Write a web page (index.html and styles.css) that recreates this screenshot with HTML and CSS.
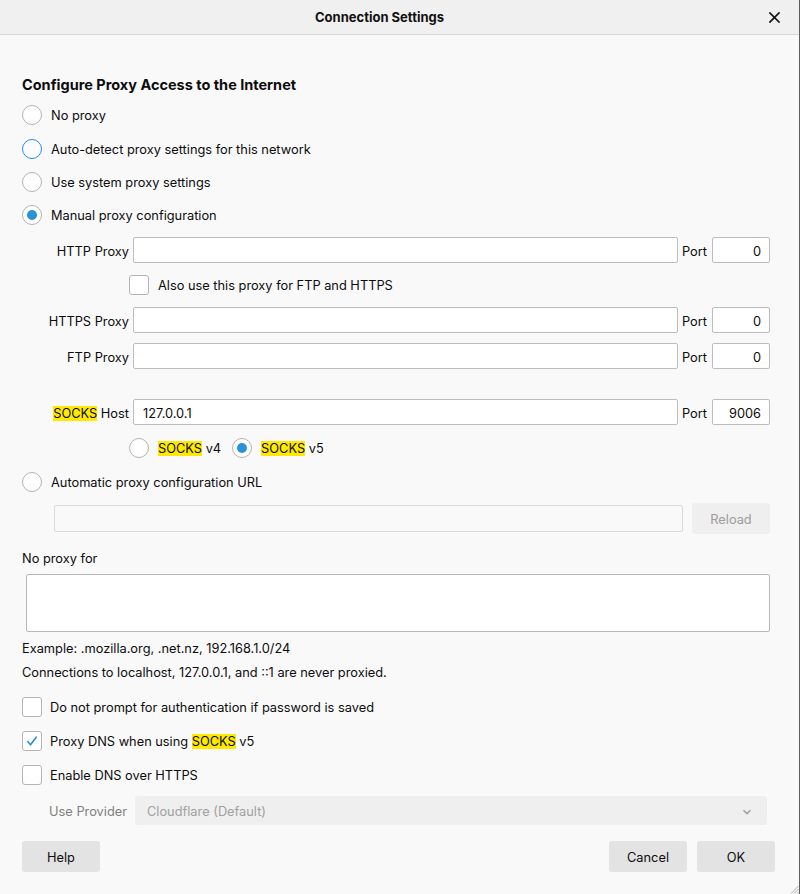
FILE: index.html
```html
<!DOCTYPE html>
<html lang="en">
<head>
<meta charset="utf-8">
<title>Connection Settings</title>
<link rel="stylesheet" href="styles.css">
</head>
<body>
<div class="window">
  <header class="titlebar">
    <h1 class="title">Connection Settings</h1>
    <span class="close" aria-label="Close">
      <svg width="11" height="11" viewBox="0 0 11 11"><path d="M1 1 L10 10 M10 1 L1 10" stroke="#111" stroke-width="1.7" stroke-linecap="square"/></svg>
    </span>
  </header>

  <main class="content">
    <h2 class="heading">Configure Proxy Access to the Internet</h2>

    <div class="choice mt11"><span class="radio"></span><span class="txt">No proxy</span></div>
    <div class="choice mt14"><span class="radio focused"></span><span class="txt">Auto-detect proxy settings for this network</span></div>
    <div class="choice mt13"><span class="radio"></span><span class="txt">Use system proxy settings</span></div>
    <div class="choice mt13"><span class="radio checked"></span><span class="txt">Manual proxy configuration</span></div>

    <div class="field-row mt12">
      <span class="field-label txt">HTTP Proxy</span>
      <span class="input host"></span>
      <span class="port-label txt">Port</span>
      <span class="input port">0</span>
    </div>

    <div class="choice indent mt12"><span class="checkbox"></span><span class="txt">Also use this proxy for FTP and HTTPS</span></div>

    <div class="field-row mt12">
      <span class="field-label txt">HTTPS Proxy</span>
      <span class="input host"></span>
      <span class="port-label txt">Port</span>
      <span class="input port">0</span>
    </div>

    <div class="field-row mt10">
      <span class="field-label txt">FTP Proxy</span>
      <span class="input host"></span>
      <span class="port-label txt">Port</span>
      <span class="input port">0</span>
    </div>

    <div class="field-row mt30">
      <span class="field-label txt"><mark>SOCKS</mark> Host</span>
      <span class="input host value">127.0.0.1</span>
      <span class="port-label txt">Port</span>
      <span class="input port">9006</span>
    </div>

    <div class="version-row indent mt13">
      <div class="choice"><span class="radio"></span><span class="txt"><mark>SOCKS</mark> v4</span></div>
      <div class="choice"><span class="radio checked"></span><span class="txt"><mark>SOCKS</mark> v5</span></div>
    </div>

    <div class="choice mt14"><span class="radio"></span><span class="txt">Automatic proxy configuration URL</span></div>

    <div class="url-row mt11">
      <span class="input url disabled"></span>
      <span class="button disabled-btn">Reload</span>
    </div>

    <p class="text-line mt17">No proxy for</p>
    <div class="textarea mt9"></div>
    <p class="text-line mt9">Example: .mozilla.org, .net.nz, 192.168.1.0/24</p>
    <p class="text-line mt10">Connections to localhost, 127.0.0.1, and ::1 are never proxied.</p>

    <div class="choice check mt18"><span class="checkbox"></span><span class="txt">Do not prompt for authentication if password is saved</span></div>
    <div class="choice check mt14"><span class="checkbox checked">
      <svg width="20" height="20" viewBox="0 0 20 20"><path d="M5.2 10.6 L8.4 14.2 L14.8 5.6" fill="none" stroke="#2a8fd7" stroke-width="1.8" stroke-linecap="round" stroke-linejoin="round"/></svg>
    </span><span class="txt">Proxy DNS when using <mark>SOCKS</mark> v5</span></div>
    <div class="choice check mt14"><span class="checkbox"></span><span class="txt">Enable DNS over HTTPS</span></div>

    <div class="provider-row mt11">
      <span class="provider-label txt">Use Provider</span>
      <span class="select">
        <span>Cloudflare (Default)</span>
        <svg width="10" height="6" viewBox="0 0 10 6"><path d="M1.5 1.2 L5 4.6 L8.5 1.2" fill="none" stroke="#a2a2a2" stroke-width="1.6"/></svg>
      </span>
    </div>
  </main>

  <footer class="footer">
    <span class="button">Help</span>
    <div class="footer-right">
      <span class="button">Cancel</span>
      <span class="button">OK</span>
    </div>
  </footer>

  <svg class="grip" width="10" height="10" viewBox="0 0 10 10"><path d="M9.5 2 L2 9.5 M9.5 5 L5 9.5 M9.5 8 L8 9.5" stroke="#9a9a9a" stroke-width="0.8"/></svg>
</div>
</body>
</html>
```

FILE: styles.css
```css
html, body {
  margin: 0;
  padding: 0;
  background: #f9f9f9;
}

.window {
  position: relative;
  width: 800px;
  height: 894px;
  box-sizing: border-box;
  border-right: 1px solid #5e5e5e;
  background: #f9f9f9;
  display: flex;
  flex-direction: column;
  font-family: Inter, "Liberation Sans", Arial, sans-serif;
  font-size: 12.8px;
  color: #0c0c0d;
  overflow: hidden;
}

.titlebar {
  height: 34px;
  flex: 0 0 34px;
  border-bottom: 1px solid #d6d6d6;
  background: #f0f0f0;
  display: flex;
  align-items: center;
  justify-content: space-between;
  padding-left: 315px;
  padding-right: 19px;
}

.title {
  margin: 0;
  font-size: 13px;
  font-weight: 650;
  color: #111;
}

.close {
  display: flex;
}

.content {
  display: flex;
  flex-direction: column;
  padding: 41px 29px 0 22px;
}

.heading {
  margin: 0;
  font-size: 14.5px;
  line-height: 18px;
  font-weight: 650;
}

.mt9 { margin-top: 9px; }
.mt10 { margin-top: 10px; }
.mt11 { margin-top: 11px; }
.mt12 { margin-top: 12px; }
.mt13 { margin-top: 13px; }
.mt14 { margin-top: 14px; }
.mt17 { margin-top: 17px; }
.mt18 { margin-top: 18px; }
.mt30 { margin-top: 30px; }

/* text sits a pixel lower than its centred box */
.txt {
  padding-top: 2px;
}

.choice {
  display: flex;
  align-items: center;
  gap: 9px;
  height: 20px;
  line-height: 20px;
}

.choice.check {
  gap: 8px;
}

.indent {
  margin-left: 107px;
}

.radio {
  width: 20px;
  height: 20px;
  box-sizing: border-box;
  border: 1px solid #b4b4b4;
  border-radius: 50%;
  background: #fff;
  flex: 0 0 auto;
  display: flex;
  align-items: center;
  justify-content: center;
}

.radio.focused {
  border: 1.5px solid #1a8cff;
}

.radio.checked::after {
  content: "";
  width: 10px;
  height: 10px;
  border-radius: 50%;
  background: #2a93d8;
}

.checkbox {
  width: 20px;
  height: 20px;
  box-sizing: border-box;
  border: 1px solid #b4b4b4;
  border-radius: 3px;
  background: #fff;
  flex: 0 0 auto;
  display: flex;
  align-items: center;
  justify-content: center;
}

.checkbox svg {
  display: block;
}

mark {
  background: #ffe900;
  color: #0c0c0d;
}

.field-row {
  display: flex;
  align-items: center;
  height: 26px;
}

.field-label {
  width: 107px;
  text-align: right;
  margin-right: 4px;
  white-space: nowrap;
}

.input {
  height: 26px;
  box-sizing: border-box;
  border: 1px solid #bdbdbd;
  border-radius: 2px;
  background: #fff;
  display: flex;
  align-items: center;
  padding-top: 2px;
}

.input.host {
  flex: 1;
}

.input.value {
  padding-left: 9px;
}

.port-label {
  margin: 0 4px 0 4px;
  width: 26px;
}

.input.port {
  width: 58px;
  justify-content: flex-end;
  padding-right: 8px;
}

.version-row {
  display: flex;
  gap: 11px;
  height: 20px;
}

.url-row {
  display: flex;
  align-items: center;
  margin-left: 32px;
  gap: 9px;
  height: 31px;
}

.input.url {
  flex: 1;
  height: 27px;
}

.input.disabled {
  background: #f9f9f9;
  border-color: #dadada;
}

.button {
  width: 78px;
  height: 31px;
  box-sizing: border-box;
  padding-top: 2px;
  border-radius: 3px;
  background: #e3e3e3;
  display: flex;
  align-items: center;
  justify-content: center;
  color: #0c0c0d;
}

.button.disabled-btn {
  background: #efefef;
  color: #9c9c9c;
}

.text-line {
  margin-bottom: 0;
  line-height: 16px;
  height: 14px;
}

.textarea {
  margin-left: 4px;
  height: 58px;
  box-sizing: border-box;
  border: 1px solid #b8b8b8;
  border-radius: 2px;
  background: #fff;
}

.provider-row {
  display: flex;
  align-items: center;
  height: 29px;
  margin-right: 3px;
}

.provider-label {
  width: 105px;
  text-align: right;
  color: #808080;
  margin-right: 8px;
}

.select {
  flex: 1;
  height: 29px;
  box-sizing: border-box;
  border-radius: 3px;
  background: #efefef;
  color: #a0a0a0;
  display: flex;
  align-items: center;
  justify-content: space-between;
  padding: 2px 15px 0 12px;
}

.footer {
  margin-top: 16px;
  display: flex;
  justify-content: space-between;
  padding: 0 24px 0 22px;
}

.footer-right {
  display: flex;
  gap: 10px;
}

.grip {
  position: absolute;
  right: 0;
  bottom: 0;
}
```
